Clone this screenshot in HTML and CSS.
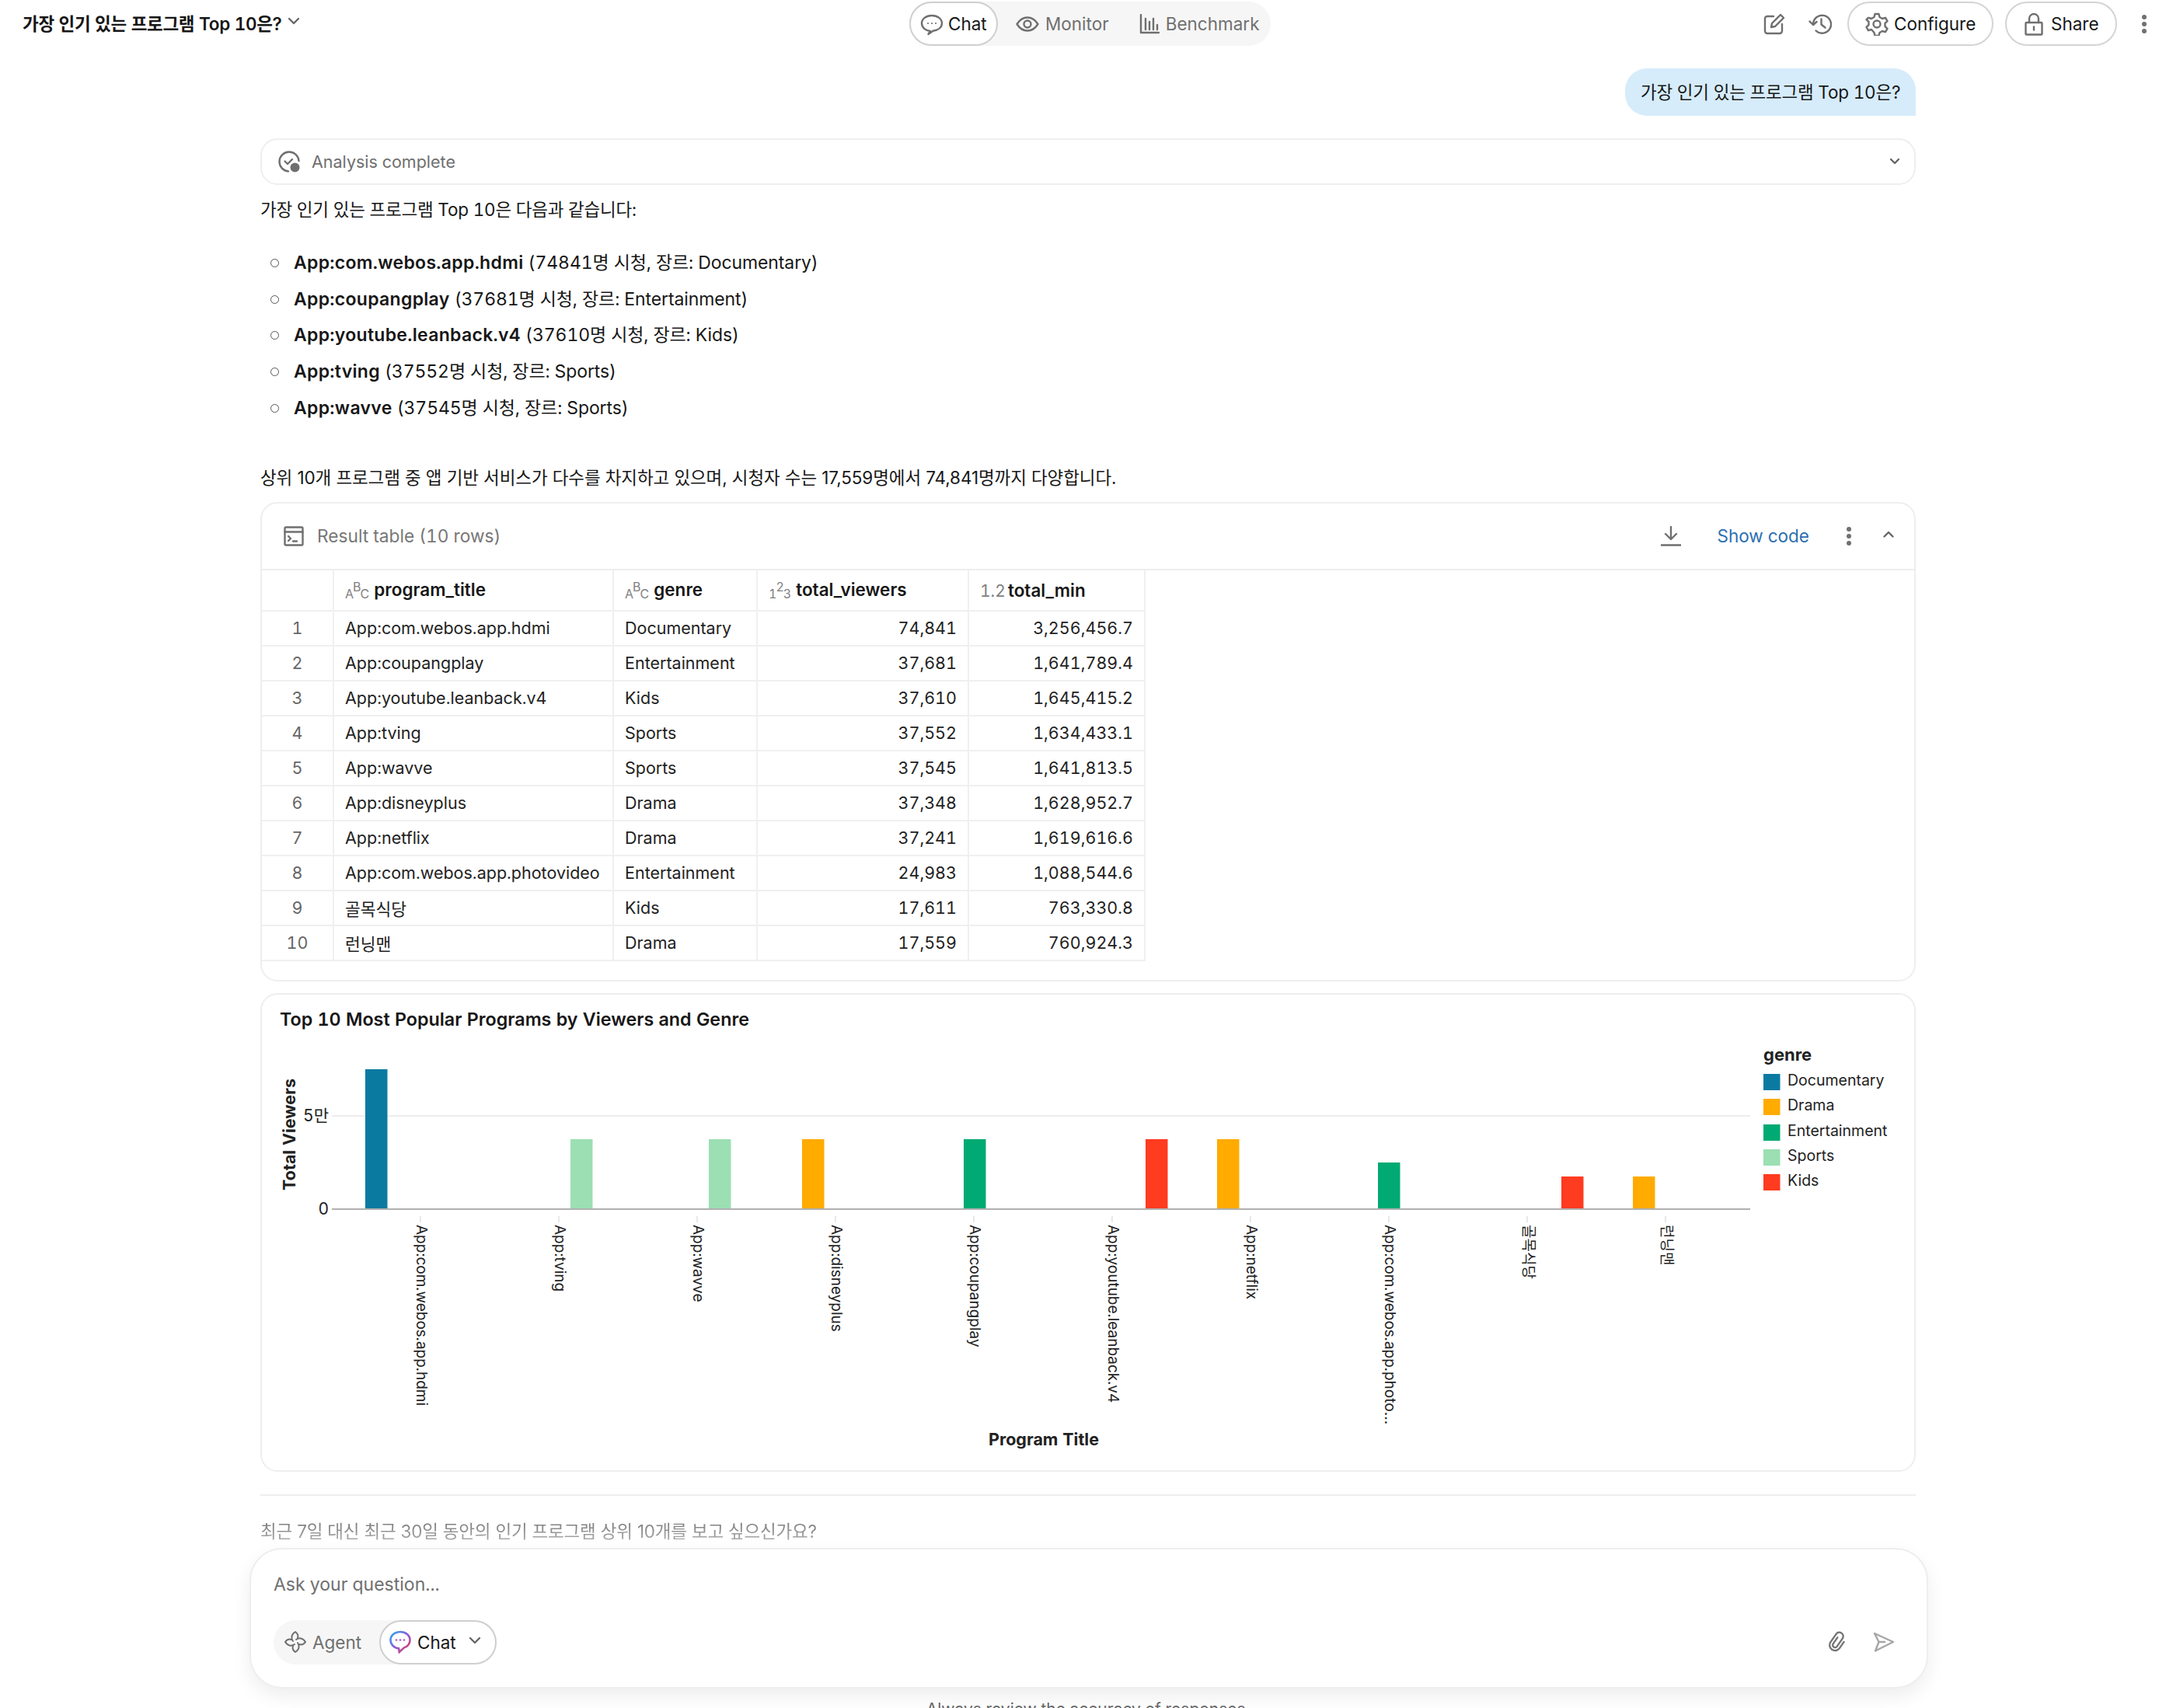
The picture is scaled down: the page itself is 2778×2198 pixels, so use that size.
FILE: index.html
```html
<!DOCTYPE html>
<html lang="ko">
  <head>
    <meta charset="UTF-8" />
    <title>Chat</title>
    <link rel="stylesheet" href="styles.css">
  </head>

  <body>
    <header class="topbar">
      <div class="chat-title">
        <span>가장 인기 있는 프로그램 Top 10은?</span>
        <svg class="chev-small" viewBox="0 0 16 10"><path d="M2 2l6 6 6-6" /></svg>
      </div>
      <nav class="segment">
        <a class="segment-item active">
          <svg class="icon-line ic-chat" viewBox="0 0 30 28"><path d="M15 2C7.5 2 2 6.4 2 12c0 5.4 5 9.7 11 10l-2.5 4 6-4.2C23.5 20.8 28 17 28 12 28 6.4 22.5 2 15 2z" /><path class="dots" d="M10 12h.1M15 12h.1M20 12h.1" /></svg>
          Chat
        </a>
        <a class="segment-item">
          <svg class="icon-line ic-eye" viewBox="0 0 30 20"><path d="M1.5 10C5 4.5 9.5 1.5 15 1.5S25 4.5 28.5 10C25 15.5 20.5 18.5 15 18.5S5 15.5 1.5 10z" /><circle cx="15" cy="10" r="4.5" /></svg>
          Monitor
        </a>
        <a class="segment-item">
          <svg class="icon-line ic-bars" viewBox="0 0 26 26"><path d="M2 1v23h23M8 6v14M13 10v10M18 6v14M23 14v6" /></svg>
          Benchmark
        </a>
      </nav>
      <div class="top-actions">
        <svg class="icon-line ic-edit" viewBox="0 0 28 28"><path d="M13 4H5a3 3 0 0 0-3 3v16a3 3 0 0 0 3 3h16a3 3 0 0 0 3-3v-9" /><path d="M10 18l1-5L22 2l4 4-11 11z" /></svg>
        <svg class="icon-line ic-history" viewBox="0 0 30 28"><path d="M6 14a11.5 11.5 0 1 1 3.5 8.5" /><path d="M1.5 10.5L6 15l4.5-4" /><path d="M16.5 7.5v7l5 4" /></svg>
        <button class="pill-btn btn-config">
          <svg class="icon-line ic-gear" viewBox="0 0 30 30"><path d="M12.5 2h5l1 4 3.5 2 4-1.2 2.500 4.400-3 2.800v4l3 2.800-2.500 4.400-4-1.200-3.500 2-1 4h-5l-1-4L8 22l-4 1.200-2.500-4.400 3-2.800v-4l-3-2.800L4 6.800 8 8l3.500-2z" /><circle cx="15" cy="15" r="4.5" /></svg>
          Configure
        </button>
        <button class="pill-btn btn-share">
          <svg class="icon-line ic-lock" viewBox="0 0 24 30"><path d="M6 13V8a6 6 0 0 1 12 0v5" /><rect x="1.5" y="13" width="21" height="15.5" rx="1" /><path d="M12 18.5v4" /></svg>
          Share
        </button>
        <svg class="kebab" viewBox="0 0 8 26"><circle cx="4" cy="4" r="3" /><circle cx="4" cy="13" r="3" /><circle cx="4" cy="22" r="3" /></svg>
      </div>
    </header>

    <main class="thread">
      <div class="bubble">가장 인기 있는 프로그램 Top 10은?</div>

      <div class="analysis">
        <svg class="ic-analysis" viewBox="0 0 28 28"><path class="ring" d="M13 26.5A12.5 12.5 0 1 1 26.5 13" /><path class="ring" d="M8.5 13.5l3.5 3.500 6-6" /><circle cx="21.5" cy="21.5" r="6" /></svg>
        <span>Analysis complete</span>
        <svg class="chev-tiny" viewBox="0 0 14 10"><path d="M2 2l5 5 5-5" /></svg>
      </div>

      <p class="answer-intro">가장 인기 있는 프로그램 Top 10은 다음과 같습니다:</p>
      <ul class="answer-list">
        <li><strong>App:com.webos.app.hdmi</strong> (74841명 시청, 장르: Documentary)</li>
        <li><strong>App:coupangplay</strong> (37681명 시청, 장르: Entertainment)</li>
        <li><strong>App:youtube.leanback.v4</strong> (37610명 시청, 장르: Kids)</li>
        <li><strong>App:tving</strong> (37552명 시청, 장르: Sports)</li>
        <li><strong>App:wavve</strong> (37545명 시청, 장르: Sports)</li>
      </ul>
      <p class="answer-summary">상위 10개 프로그램 중 앱 기반 서비스가 다수를 차지하고 있으며, 시청자 수는 17,559명에서 74,841명까지 다양합니다.</p>

      <section class="result-card">
        <div class="result-head">
          <svg class="icon-line ic-terminal" viewBox="0 0 26 26"><rect x="1.5" y="1.5" width="23" height="23" rx="1.5" /><path d="M1.5 7.5h23M6 13l3 3-3 3M12 19.5h5" /></svg>
          <span class="result-name">Result table (10 rows)</span>
          <svg class="icon-line ic-download" viewBox="0 0 26 26"><path d="M13 1v15M6 10l7 7 7-7M0 24.5h26" /></svg>
          <a class="show-code">Show code</a>
          <svg class="kebab kebab-sm" viewBox="0 0 8 26"><circle cx="4" cy="4" r="3" /><circle cx="4" cy="13" r="3" /><circle cx="4" cy="22" r="3" /></svg>
          <svg class="chev-up" viewBox="0 0 14 10"><path d="M1.5 7.5L7 2l5.5 5.5" /></svg>
        </div>
        <table class="result-table">
          <colgroup>
            <col class="col-idx" /><col class="col-title" /><col class="col-genre" /><col class="col-viewers" /><col class="col-min" />
          </colgroup>
          <thead>
            <tr>
              <th></th>
              <th><span class="type"><i class="lo">A</i><i class="hi">B</i><i class="lo">C</i></span> program_title</th>
              <th><span class="type"><i class="lo">A</i><i class="hi">B</i><i class="lo">C</i></span> genre</th>
              <th><span class="type"><i class="lo">1</i><i class="hi">2</i><i class="lo">3</i></span> total_viewers</th>
              <th><span class="type type-float">1.2</span> total_min</th>
            </tr>
          </thead>
          <tbody>
            <tr><td class="idx">1</td><td>App:com.webos.app.hdmi</td><td>Documentary</td><td class="num">74,841</td><td class="num">3,256,456.7</td></tr>
            <tr><td class="idx">2</td><td>App:coupangplay</td><td>Entertainment</td><td class="num">37,681</td><td class="num">1,641,789.4</td></tr>
            <tr><td class="idx">3</td><td>App:youtube.leanback.v4</td><td>Kids</td><td class="num">37,610</td><td class="num">1,645,415.2</td></tr>
            <tr><td class="idx">4</td><td>App:tving</td><td>Sports</td><td class="num">37,552</td><td class="num">1,634,433.1</td></tr>
            <tr><td class="idx">5</td><td>App:wavve</td><td>Sports</td><td class="num">37,545</td><td class="num">1,641,813.5</td></tr>
            <tr><td class="idx">6</td><td>App:disneyplus</td><td>Drama</td><td class="num">37,348</td><td class="num">1,628,952.7</td></tr>
            <tr><td class="idx">7</td><td>App:netflix</td><td>Drama</td><td class="num">37,241</td><td class="num">1,619,616.6</td></tr>
            <tr><td class="idx">8</td><td>App:com.webos.app.photovideo</td><td>Entertainment</td><td class="num">24,983</td><td class="num">1,088,544.6</td></tr>
            <tr><td class="idx">9</td><td>골목식당</td><td>Kids</td><td class="num">17,611</td><td class="num">763,330.8</td></tr>
            <tr><td class="idx">10</td><td>런닝맨</td><td>Drama</td><td class="num">17,559</td><td class="num">760,924.3</td></tr>
          </tbody>
        </table>
      </section>

      <section class="chart-card">
        <h3 class="chart-title">Top 10 Most Popular Programs by Viewers and Genre</h3>
        <svg class="chart" viewBox="337 1340 2126 540">
          <line class="grid" x1="427" y1="1435" x2="2252" y2="1435" />
          <g class="ticks">
            <line x1="541" y1="1564" x2="541" y2="1572" />
            <line x1="719" y1="1564" x2="719" y2="1572" />
            <line x1="897" y1="1564" x2="897" y2="1572" />
            <line x1="1075" y1="1564" x2="1075" y2="1572" />
            <line x1="1253" y1="1564" x2="1253" y2="1572" />
            <line x1="1431" y1="1564" x2="1431" y2="1572" />
            <line x1="1609" y1="1564" x2="1609" y2="1572" />
            <line x1="1787" y1="1564" x2="1787" y2="1572" />
            <line x1="1965" y1="1564" x2="1965" y2="1572" />
            <line x1="2143" y1="1564" x2="2143" y2="1572" />
          </g>
          <rect class="c-doc" x="470" y="1375" width="28.5" height="180" />
          <rect class="c-spo" x="734" y="1465" width="28.5" height="90" />
          <rect class="c-spo" x="912" y="1465" width="28.5" height="90" />
          <rect class="c-dra" x="1032" y="1465" width="28.5" height="90" />
          <rect class="c-ent" x="1240" y="1465" width="28.5" height="90" />
          <rect class="c-kid" x="1474" y="1465" width="28.5" height="90" />
          <rect class="c-dra" x="1566" y="1465" width="28.5" height="90" />
          <rect class="c-ent" x="1773" y="1495" width="28.5" height="60" />
          <rect class="c-kid" x="2009" y="1513" width="28.5" height="42" />
          <rect class="c-dra" x="2101" y="1513" width="28.5" height="42" />
          <line class="axis" x1="427" y1="1555" x2="2252" y2="1555" />
          <text class="tick-y" x="423" y="1436">5만</text>
          <text class="tick-y" x="423" y="1556">0</text>
          <text class="axis-title" transform="translate(374 1459) rotate(-90)">Total Viewers</text>
          <text class="axis-title" x="1343" y="1853">Program Title</text>
          <g class="tick-x">
            <text transform="translate(541 1575) rotate(90)">App:com.webos.app.hdmi</text>
            <text transform="translate(719 1575) rotate(90)">App:tving</text>
            <text transform="translate(897 1575) rotate(90)">App:wavve</text>
            <text transform="translate(1075 1575) rotate(90)">App:disneyplus</text>
            <text transform="translate(1253 1575) rotate(90)">App:coupangplay</text>
            <text transform="translate(1431 1575) rotate(90)">App:youtube.leanback.v4</text>
            <text transform="translate(1609 1575) rotate(90)">App:netflix</text>
            <text transform="translate(1787 1575) rotate(90)">App:com.webos.app.photo…</text>
            <text transform="translate(1965 1575) rotate(90)">골목식당</text>
            <text transform="translate(2143 1575) rotate(90)">런닝맨</text>
          </g>
          <text class="legend-title" x="2269" y="1358">genre</text>
          <g class="legend">
            <rect class="c-doc" x="2269" y="1381" width="21.5" height="21" /><text x="2300" y="1391">Documentary</text>
            <rect class="c-dra" x="2269" y="1413" width="21.5" height="21" /><text x="2300" y="1423">Drama</text>
            <rect class="c-ent" x="2269" y="1446" width="21.5" height="21" /><text x="2300" y="1456">Entertainment</text>
            <rect class="c-spo" x="2269" y="1478" width="21.5" height="21" /><text x="2300" y="1488">Sports</text>
            <rect class="c-kid" x="2269" y="1510" width="21.5" height="21" /><text x="2300" y="1520">Kids</text>
          </g>
        </svg>
      </section>

      <hr class="divider" />
      <p class="suggestion">최근 7일 대신 최근 30일 동안의 인기 프로그램 상위 10개를 보고 싶으신가요?</p>

      <div class="composer">
        <div class="composer-input">Ask your question...</div>
        <div class="composer-row">
          <div class="mode-toggle">
            <a class="mode-item">
              <svg class="icon-line ic-agent" viewBox="0 0 30 30">
                <path d="M12 14C9 10 10 5 15 2c3 2 4 5 3 8" />
                <path d="M16 12c4-3 9-2 12 3-2 3-5 4-8 3" />
                <path d="M18 16c3 4 2 9-3 12-3-2-4-5-3-8" />
                <path d="M14 18c-4 3-9 2-12-3 2-3 5-4 8-3" />
              </svg>
              Agent
            </a>
            <a class="mode-item active">
              <svg class="ic-chat-color" viewBox="0 0 30 30">
                <defs><linearGradient id="chatGrad" x1="0" y1="0" x2="1" y2="1"><stop offset="0" stop-color="#29a8e8" /><stop offset=".5" stop-color="#8a5ce0" /><stop offset="1" stop-color="#f0384f" /></linearGradient></defs>
                <path d="M15 2C8 2 2.5 6.5 2.5 12.5S7.5 23 13 23.3l.8 4.7 6.2-5.6c4.5-1.6 7.5-5.4 7.5-9.9C27.5 6.5 22 2 15 2z" />
                <circle cx="10" cy="12.5" r="1.3" /><circle cx="15" cy="12.5" r="1.3" /><circle cx="20" cy="12.5" r="1.3" />
              </svg>
              Chat
              <svg class="chev-small" viewBox="0 0 16 10"><path d="M2 2l6 6 6-6" /></svg>
            </a>
          </div>
          <div class="composer-tools">
            <svg class="ic-clip" viewBox="0 0 24 28"><path transform="rotate(35 12 14)" d="M9 9v10a3 3 0 0 0 6 0V6.5a5 5 0 0 0-10 0V19a7 7 0 0 0 14 0V9" /></svg>
            <svg class="ic-send" viewBox="0 0 28 26"><path d="M2 2l24 11L3 24.5 7.5 13zM7.5 13H15" /></svg>
          </div>
        </div>
      </div>
      <p class="disclaimer">Always review the accuracy of responses.</p>
    </main>
  </body>
</html>
```

FILE: styles.css
```css
* {
  box-sizing: border-box;
}

html, body {
  margin: 0;
  padding: 0;
  height: 2198px;
  overflow: hidden;
  background: #fff;
  color: #171717;
  font-family: Inter, 'Noto Sans CJK KR', sans-serif;
  font-variant-numeric: tabular-nums;
}

svg {
  display: block;
  flex: none;
}

.icon-line path,
.icon-line circle,
.icon-line rect {
  fill: none;
  stroke: #6f6f6f;
  stroke-width: 2.4;
  stroke-linecap: round;
  stroke-linejoin: round;
}

/* top bar */
.topbar {
  display: flex;
  align-items: flex-start;
  height: 60px;
  padding: 2px 0 0 29px;
}

.chat-title {
  flex: 0 0 1141px;
  height: 57px;
  display: flex;
  align-items: center;
  gap: 7px;
  padding-bottom: 3px;
  font-size: 22.5px;
  font-weight: 600;
  letter-spacing: -0.3px;
}

.chev-small {
  width: 16px;
  height: 10px;
  margin-bottom: 4px;
}

.chev-small path,
.chev-tiny path,
.chev-up path {
  fill: none;
  stroke: #666;
  stroke-width: 2.4;
  stroke-linecap: round;
  stroke-linejoin: round;
}

.segment {
  display: flex;
  align-items: center;
  height: 57px;
  width: 465px;
  background: #f6f6f6;
  border-radius: 29px;
}

.segment-item {
  display: flex;
  align-items: center;
  gap: 8px;
  height: 57px;
  font-size: 22.5px;
  color: #707070;
}

.segment-item.active {
  width: 114px;
  padding-left: 12px;
  color: #171717;
  background: #fff;
  border: 2px solid #cfcfcf;
  border-radius: 29px;
  gap: 6px;
  margin-right: 23px;
}

.segment-item:last-child {
  margin-left: 39px;
}

.ic-chat { width: 30px; height: 28px; margin-top: 3px; }
.ic-chat .dots { stroke-width: 2; }
.ic-eye { width: 30px; height: 20px; }
.ic-bars { width: 26px; height: 26px; }

.top-actions {
  margin-left: auto;
  display: flex;
  align-items: center;
  height: 57px;
  padding-right: 15px;
}

.ic-edit { width: 28px; height: 28px; margin-right: 30px; }
.ic-history { width: 30px; height: 28px; margin-right: 20px; }

.pill-btn {
  display: flex;
  align-items: center;
  height: 57px;
  background: #fff;
  border: 2px solid #d4d4d4;
  border-radius: 29px;
  font: inherit;
  font-size: 22.5px;
  color: #171717;
}

.btn-config { width: 188px; padding: 0 0 0 21px; gap: 7px; margin-right: 15px; }
.btn-share { width: 144px; padding: 0 0 0 23px; gap: 10px; margin-right: 31px; }
.ic-gear { width: 30px; height: 30px; }
.ic-lock { width: 24px; height: 30px; }

.kebab {
  width: 8px;
  height: 26px;
}

.kebab circle {
  fill: #707070;
}

/* thread */
.thread {
  width: 2465px;
  padding-left: 335px;
}

.bubble {
  width: 374px;
  margin: 28px 0 0 auto;
  height: 61px;
  padding: 0 0 3px 20px;
  display: flex;
  align-items: center;
  background: #d6ecfb;
  border-radius: 28px 28px 0 28px;
  font-size: 22.5px;
  letter-spacing: -0.2px;
}

.analysis {
  display: flex;
  align-items: center;
  height: 60px;
  margin-top: 29px;
  padding: 0 18px 0 21px;
  border: 2px solid #eeeeee;
  border-radius: 22px;
  color: #6f6f6f;
  font-size: 21.5px;
}

.analysis span {
  margin-left: 15px;
}

.ic-analysis { width: 28px; height: 28px; }
.ic-analysis .ring {
  fill: none;
  stroke: #6f6f6f;
  stroke-width: 2.4;
  stroke-linecap: round;
  stroke-linejoin: round;
}
.ic-analysis circle { fill: #6f6f6f; }

.chev-tiny {
  width: 14px;
  height: 10px;
  margin-left: auto;
}

.answer-intro {
  margin: 12px 0 0;
  line-height: 40px;
  font-size: 22.5px;
  letter-spacing: -0.2px;
}

.answer-list {
  margin: 25px 0 0;
  padding: 0 0 0 43px;
  list-style: none;
  font-size: 23px;
  line-height: 46.7px;
  letter-spacing: -0.1px;
}

.answer-list li {
  position: relative;
}

.answer-list li::before {
  content: '';
  position: absolute;
  left: -30px;
  top: 18px;
  width: 9px;
  height: 9px;
  border: 1.5px solid #555;
  border-radius: 50%;
}

.answer-list strong {
  font-weight: 600;
  letter-spacing: 0.3px;
}

.answer-summary {
  margin: 46px 0 0;
  line-height: 40px;
  font-size: 22.5px;
  font-variant-numeric: normal;
  letter-spacing: -0.1px;
}

/* result table */
.result-card {
  height: 617px;
  margin-top: 11px;
  border: 2px solid #eeeeee;
  border-radius: 22px;
}

.result-head {
  display: flex;
  align-items: center;
  height: 86px;
  padding-left: 28px;
  border-bottom: 2px solid #eeeeee;
  color: #777;
  font-size: 22.7px;
}

.result-name { margin-left: 17px; }
.ic-terminal { width: 26px; height: 26px; }
.ic-download { width: 26px; height: 26px; margin-left: auto; }

.show-code {
  margin-left: 46px;
  color: #2a6fb0;
  font-size: 22.5px;
}

.kebab-sm {
  margin: 0 0 0 47px;
}

.chev-up {
  width: 14px;
  height: 10px;
  margin: 0 26px 4px 40px;
}

.result-table {
  width: 1136px;
  table-layout: fixed;
  border-collapse: collapse;
  font-size: 21.5px;
}

.col-idx { width: 92px; }
.col-title { width: 360px; }
.col-genre { width: 185px; }
.col-viewers { width: 272px; }
.col-min { width: 227px; }

.result-table th,
.result-table td {
  height: 45px;
  padding: 0 14px;
  border-right: 2px solid #f0f0f0;
  border-bottom: 2px solid #f0f0f0;
  white-space: nowrap;
  text-align: left;
  color: #222;
  font-weight: 400;
}

.result-table th {
  height: 52px;
  font-size: 22.5px;
  font-weight: 600;
  color: #171717;
}

.result-table td.idx {
  padding: 0;
  text-align: center;
  color: #666;
}

.result-table td.num {
  padding-right: 14px;
  text-align: right;
}

.type {
  display: inline-block;
  color: #808080;
  font-weight: 400;
}

.type i {
  font-style: normal;
  font-size: 16px;
}

.type-float {
  font-size: 21px;
  margin-right: -3px;
}

.type .hi { vertical-align: 6px; margin: 0 -1px; }
.type .lo { vertical-align: -3px; }

/* chart */
.chart-card {
  height: 616px;
  margin-top: 15px;
  border: 2px solid #eeeeee;
  border-radius: 22px;
}

.chart-title {
  margin: 0;
  height: 61px;
  padding: 14px 0 0 23px;
  line-height: 36px;
  font-size: 23.3px;
  font-weight: 600;
}

.chart {
  width: 2126px;
  height: 540px;
  overflow: visible;
}

.chart text {
  font-family: Inter, 'Noto Sans CJK KR', sans-serif;
  fill: #222;
  dominant-baseline: middle;
}

.grid { stroke: #eeeeee; stroke-width: 2; }
.axis { stroke: #b0b0b0; stroke-width: 2; }
.ticks line { stroke: #e8e8e8; stroke-width: 2; }

.c-doc { fill: #0b7aa1; }
.c-dra { fill: #ffab00; }
.c-ent { fill: #00aa72; }
.c-spo { fill: #9bdfb2; }
.c-kid { fill: #ff3b20; }

.chart .tick-y {
  font-size: 21px;
  text-anchor: end;
}

.chart .axis-title {
  font-size: 21.5px;
  font-weight: 700;
  text-anchor: middle;
}

.tick-x text {
  font-size: 19px;
}

.chart .legend-title {
  font-size: 22px;
  font-weight: 700;
}

.legend text {
  font-size: 19.5px;
}

/* composer */
.divider {
  margin: 29px 0 0;
  border: 0;
  border-top: 2px solid #eeeeee;
}

.suggestion {
  margin: 25px 0 0;
  line-height: 42px;
  height: 44px;
  font-size: 22.5px;
  font-variant-numeric: normal;
  letter-spacing: -0.2px;
  color: transparent;
  background: linear-gradient(#6a6a6a, #c0c0c0);
  background-clip: text;
  -webkit-background-clip: text;
}

.composer {
  display: flex;
  flex-direction: column;
  justify-content: space-between;
  height: 181px;
  margin: -2px -16px 0 -14px;
  padding: 30px 41px 29px 29px;
  background: #fff;
  border: 2px solid #eeeeee;
  border-radius: 42px;
  box-shadow: 0 10px 24px rgba(0, 0, 0, 0.07);
}

.composer-input {
  line-height: 30px;
  font-size: 23px;
  color: #707070;
}

.composer-row {
  display: flex;
  align-items: center;
  justify-content: space-between;
}

.mode-toggle {
  display: flex;
  width: 287px;
  height: 57px;
  background: #f6f6f6;
  border-radius: 29px;
}

.mode-item {
  display: flex;
  align-items: center;
  gap: 7px;
  padding-left: 13px;
  width: 136px;
  font-size: 22.5px;
  color: #707070;
}

.mode-item.active {
  width: 151px;
  padding-left: 10px;
  gap: 7px;
  color: #171717;
  background: #fff;
  border: 2px solid #cfcfcf;
  border-radius: 29px;
}

.mode-item .chev-small {
  margin-left: 9px;
}

.ic-agent { width: 30px; height: 30px; }
.ic-agent path { stroke-width: 2; }

.ic-chat-color { width: 30px; height: 30px; }
.ic-chat-color path { fill: none; stroke: url(#chatGrad); stroke-width: 2.6; }
.ic-chat-color circle { fill: #a35cc8; }

.composer-tools {
  display: flex;
  align-items: center;
  gap: 34px;
}

.ic-clip { width: 24px; height: 28px; }
.ic-clip path { fill: none; stroke: #757575; stroke-width: 2.4; stroke-linecap: round; }
.ic-send { width: 28px; height: 26px; }
.ic-send path { fill: none; stroke: #a6a6a6; stroke-width: 2.4; stroke-linejoin: round; stroke-linecap: round; }

.disclaimer {
  margin: 14px 0 0;
  text-align: center;
  font-size: 21px;
  color: #666;
}
```
